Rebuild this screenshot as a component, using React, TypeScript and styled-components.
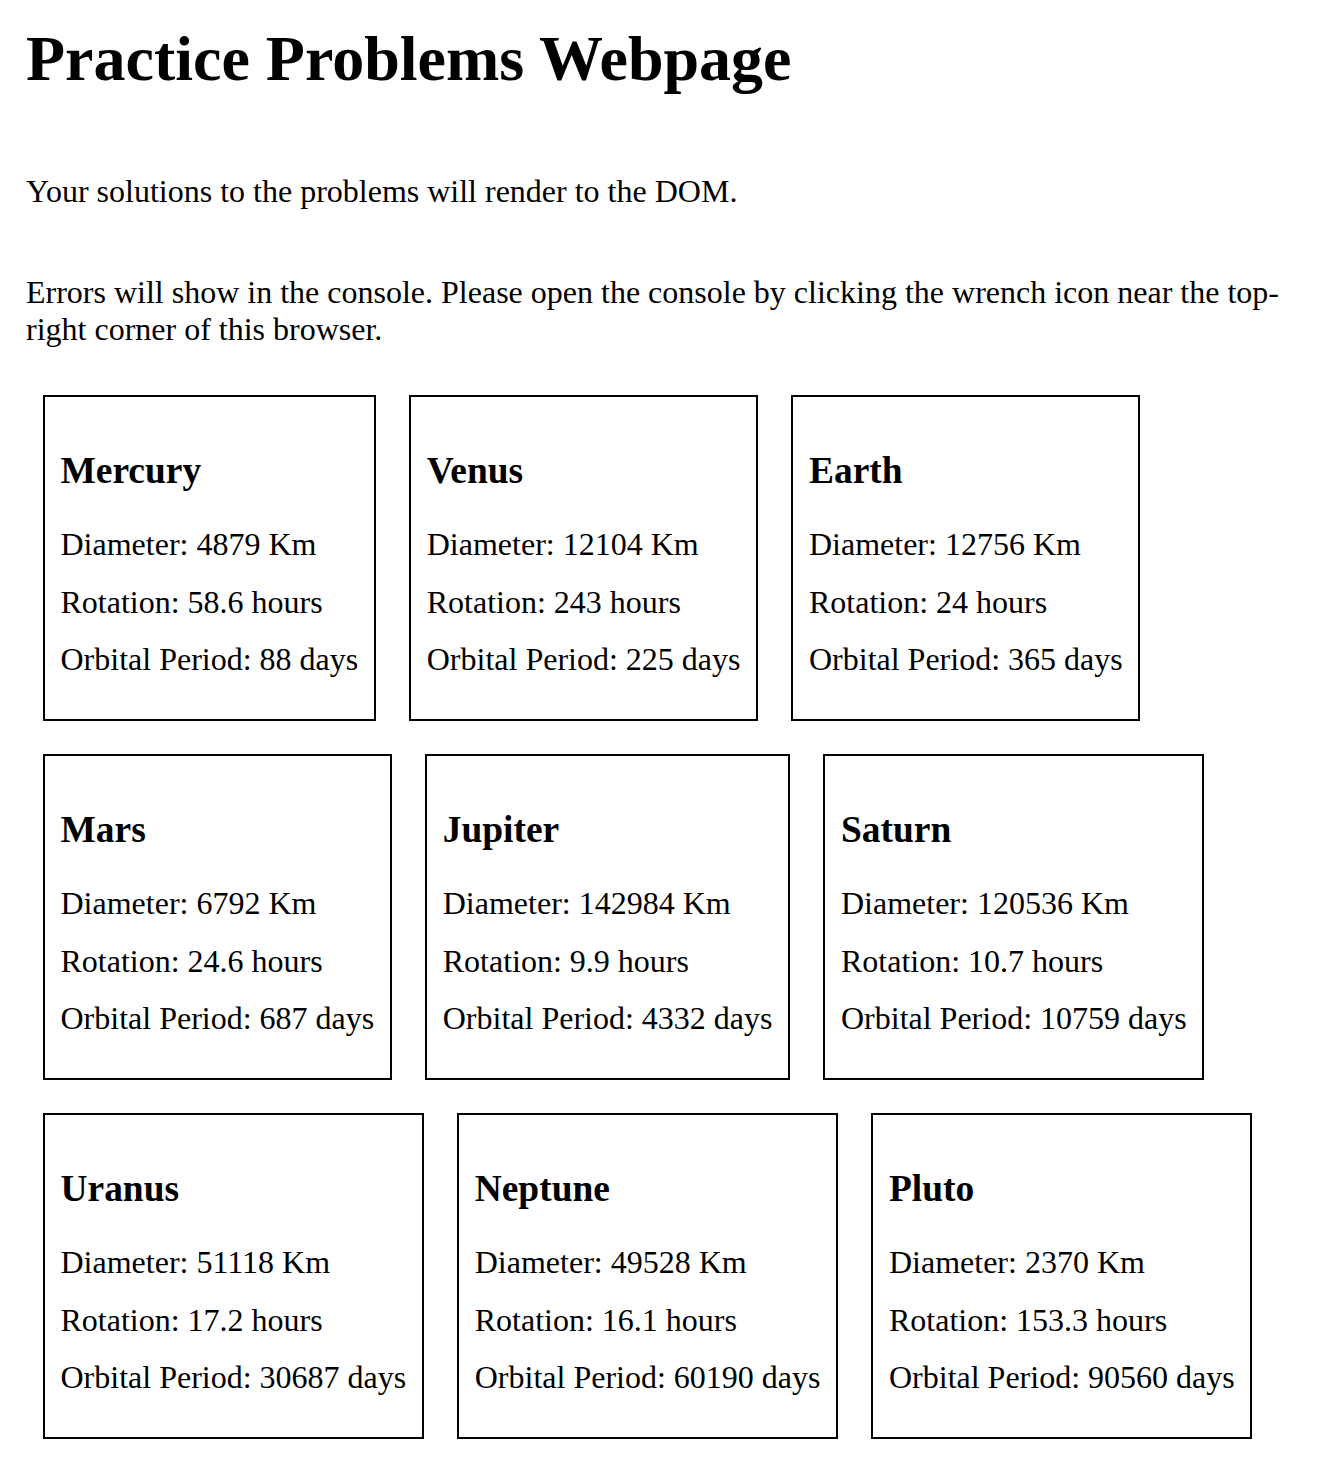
import styled, { createGlobalStyle } from "styled-components";

const GlobalStyle = createGlobalStyle`
  body {
    margin: 0;
    background-color: #fff;
    color: #000;
    font-family: "Liberation Serif", "Times New Roman", serif;
  }
`;

const Page = styled.div`
  padding: 0 26px 24px;
`;

const Title = styled.h1`
  font-size: 64px;
  font-weight: bold;
  margin: 22px 0 0;
`;

const Intro = styled.p<{ $gap: number }>`
  font-size: 32px;
  margin: ${(props) => props.$gap}px 0 0;
`;

const CardList = styled.div`
  display: flex;
  flex-wrap: wrap;
  align-items: flex-start;
  gap: 33.5px 33.5px;
  margin-top: 47px;
  padding-left: 17px;
`;

const Card = styled.div`
  border: 2px solid #000;
  padding: 20px 15.5px 20px;
`;

const PlanetName = styled.h3`
  font-size: 37.44px;
  font-weight: bold;
  margin: 32px 0 34px;
`;

const Stat = styled.p`
  font-size: 32px;
  margin: 20.5px 0;
  white-space: nowrap;
`;

interface Planet {
  name: string;
  diameter: number;
  rotation: number;
  orbit: number;
}

const planets: Planet[] = [
  { name: "Mercury", diameter: 4879, rotation: 58.6, orbit: 88 },
  { name: "Venus", diameter: 12104, rotation: 243, orbit: 225 },
  { name: "Earth", diameter: 12756, rotation: 24, orbit: 365 },
  { name: "Mars", diameter: 6792, rotation: 24.6, orbit: 687 },
  { name: "Jupiter", diameter: 142984, rotation: 9.9, orbit: 4332 },
  { name: "Saturn", diameter: 120536, rotation: 10.7, orbit: 10759 },
  { name: "Uranus", diameter: 51118, rotation: 17.2, orbit: 30687 },
  { name: "Neptune", diameter: 49528, rotation: 16.1, orbit: 60190 },
  { name: "Pluto", diameter: 2370, rotation: 153.3, orbit: 90560 },
];

const PlanetCard: React.FC<{ planet: Planet }> = ({ planet }) => {
  return (
    <Card>
      <PlanetName>{planet.name}</PlanetName>
      <Stat>Diameter: {planet.diameter} Km</Stat>
      <Stat>Rotation: {planet.rotation} hours</Stat>
      <Stat>Orbital Period: {planet.orbit} days</Stat>
    </Card>
  );
};

const App = () => {
  return (
    <>
      <GlobalStyle />
      <Page>
        <Title>Practice Problems Webpage</Title>
        <Intro $gap={77}>Your solutions to the problems will render to the DOM.</Intro>
        <Intro $gap={64}>
          Errors will show in the console. Please open the console by clicking
          the wrench icon near the top-right corner of this browser.
        </Intro>
        <CardList>
          {planets.map((planet) => (
            <PlanetCard key={planet.name} planet={planet} />
          ))}
        </CardList>
      </Page>
    </>
  );
};

export default App;
